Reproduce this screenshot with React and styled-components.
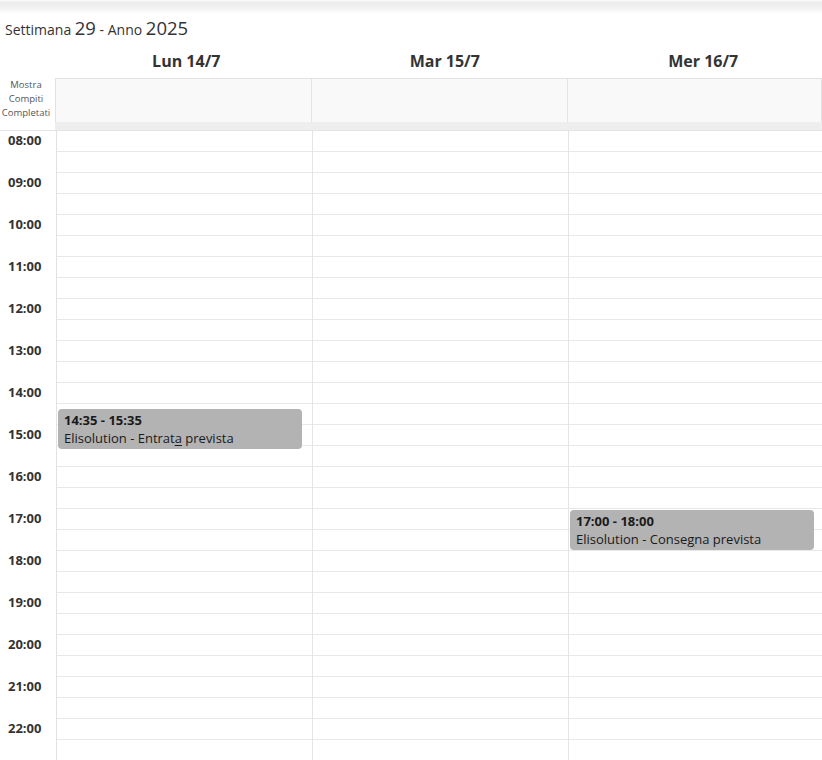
import React from 'react';
import styled, {createGlobalStyle} from 'styled-components';

const GlobalStyle = createGlobalStyle`
   html, body {
      margin: 0;
      padding: 0;
      background: #fff;
      overflow: hidden;
   }
   body {
      font-family: "Open Sans", "Noto Sans", sans-serif;
      color: #333;
   }
`;

const HOUR_HEIGHT = 42;
const FIRST_HOUR = 8;
const HOURS = [8, 9, 10, 11, 12, 13, 14, 15, 16, 17, 18, 19, 20, 21, 22];

const DAYS = [
   {label: 'Lun 14/7', events: [
      {start: '14:35', end: '15:35', title: 'Elisolution - Entrat', mark: 'a', rest: ' prevista'},
   ]},
   {label: 'Mar 15/7', events: []},
   {label: 'Mer 16/7', events: [
      {start: '17:00', end: '18:00', title: 'Elisolution - Conse', mark: 'g', rest: 'na prevista'},
   ]},
];

const COLUMNS = '56px 256px 256px 1fr';
const BODY_COLUMNS = '57px repeat(3, 256px)';

const Page = styled.div`
   width: 822px;
   height: 760px;
   overflow: hidden;
`;

const TopShade = styled.div`
   height: 14px;
   background: linear-gradient(#fafafa 0, #ebebeb 3px, #f6f6f6 10px, #fff 14px);
`;

const Title = styled.div`
   padding: 2px 0 0 5px;
   height: 27px;
   font-size: 14px;
   line-height: 24px;
   color: #333;
`;

const Big = styled.span`
   font-size: 18.5px;
`;

// header labels sit on a slightly wider table than the body grid
const HeaderRow = styled.div`
   display: grid;
   grid-template-columns: 57px repeat(3, 258.5px);
   height: 35px;
   overflow: hidden;
`;

const DayName = styled.div`
   font-weight: 700;
   font-size: 16px;
   padding-top: 1px;
   line-height: 34px;
   text-align: center;
   white-space: nowrap;
   color: #333;
`;

const AllDayRow = styled.div`
   display: grid;
   grid-template-columns: ${COLUMNS};
   border-top: 1px solid #e2e2e2;
   height: 43px;
`;

const ShowDone = styled.div`
   font-size: 9.5px;
   line-height: 14px;
   color: #555;
   text-align: center;
   margin-top: -1px;
   padding-right: 3px;
   background: #fff;
   border-right: 1px solid #e2e2e2;
`;

const AllDayCell = styled.div`
   background: #f9f9f9;
   border-right: 1px solid #e4e4e4;
`;

const Strip = styled.div`
   display: grid;
   grid-template-columns: 55px 1fr;
   height: 8px;
   border-bottom: 1px solid #e4e4e4;
   & > div:last-child {
      background: #eeeeee;
   }
`;

const Grid = styled.div`
   display: grid;
   grid-template-columns: ${BODY_COLUMNS};
`;

const TimeColumn = styled.div`
   border-right: 1px solid #e2e2e2;
`;

const HourLabel = styled.div`
   height: ${HOUR_HEIGHT}px;
   box-sizing: border-box;
   padding: 0 0 0 8px;
   font-size: 13px;
   font-weight: 700;
   line-height: 18px;
   color: #333;
`;

const DayColumn = styled.div`
   position: relative;
   border-right: 1px solid #e4e4e4;
`;

const Slot = styled.div`
   height: ${HOUR_HEIGHT / 2}px;
   box-sizing: border-box;
   border-bottom: 1px solid #e8e8e8;
`;

const Event = styled.div`
   position: absolute;
   left: 1px;
   right: 10px;
   box-sizing: border-box;
   padding: 2px 6px;
   background: #b3b3b3;
   border-radius: 4px;
   font-size: 13px;
   line-height: 18px;
   color: #1a1a1a;
   overflow: hidden;
   white-space: nowrap;
`;

const EventTime = styled.div`
   font-weight: 700;
`;

const Marked = styled.span`
   text-decoration: underline;
   text-underline-offset: 2px;
`;

const to_minutes = (value) => {
   const [h, m] = value.split(':').map(Number);
   return (h - FIRST_HOUR) * 60 + m;
};

const CalendarEvent = ({event}) => {
   const top = to_minutes(event.start) / 60 * HOUR_HEIGHT + 1;
   const height = (to_minutes(event.end) - to_minutes(event.start)) / 60 * HOUR_HEIGHT - 2;
   return <Event style={{top, height}}>
      <EventTime>{`${event.start} - ${event.end}`}</EventTime>
      <div>{event.title}<Marked>{event.mark}</Marked>{event.rest}</div>
   </Event>;
};

export default function App() {
   return <Page>
      <GlobalStyle/>
      <TopShade/>
      <Title>
         Settimana <Big>29</Big> - Anno <Big>2025</Big>
      </Title>
      <HeaderRow>
         <div/>
         {DAYS.map(day => <DayName key={day.label}>{day.label}</DayName>)}
      </HeaderRow>
      <AllDayRow>
         <ShowDone>Mostra<br/>Compiti<br/>Completati</ShowDone>
         {DAYS.map(day => <AllDayCell key={day.label}/>)}
      </AllDayRow>
      <Strip><div/><div/></Strip>
      <Grid>
         <TimeColumn>
            {HOURS.map(h => <HourLabel key={h}>{`${String(h).padStart(2, '0')}:00`}</HourLabel>)}
         </TimeColumn>
         {DAYS.map(day => <DayColumn key={day.label}>
            {HOURS.map(h => <React.Fragment key={h}><Slot/><Slot/></React.Fragment>)}
            {day.events.map(ev => <CalendarEvent key={ev.start} event={ev}/>)}
         </DayColumn>)}
      </Grid>
   </Page>;
}
